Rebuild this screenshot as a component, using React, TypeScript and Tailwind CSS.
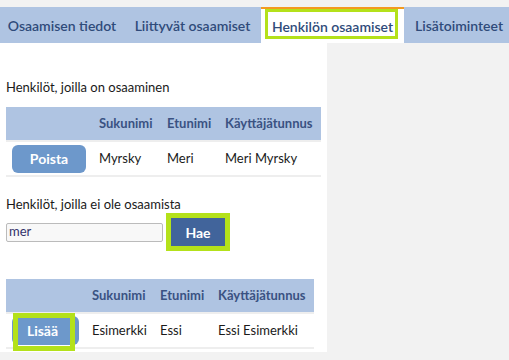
import React from "react";

const tabs = [
  { label: "Osaamisen tiedot", w: "w-[124px]", active: false },
  { label: "Liittyvät osaamiset", w: "w-[137px]", active: false },
  { label: "Henkilön osaamiset", w: "w-[143px]", active: true },
  { label: "Lisätoiminteet", w: "w-[110px]", active: false },
];

function TabBar() {
  return (
    <div className="flex h-[36px] bg-[#afc4e2] mt-[7px]">
      {tabs.map((t) =>
        t.active ? (
          <div key={t.label} className={`${t.w} shrink-0 relative bg-white border-t-2 border-[#f39a1f] flex items-center justify-center`}>
            <span className="text-[14px] font-semibold text-[#2f4b7a]">{t.label}</span>
            {/* korostuskehys */}
            <div className="absolute left-[4px] right-[6px] top-0 bottom-[4px] border-[3px] border-[#b4e11a]" />
          </div>
        ) : (
          <div key={t.label} className={`${t.w} shrink-0 flex items-center justify-center`}>
            <span className="text-[14px] font-semibold text-[#2f4b7a]">{t.label}</span>
          </div>
        )
      )}
    </div>
  );
}

function HeaderRow({ cols }: { cols: string }) {
  return (
    <div className={`grid ${cols} h-[35px] bg-[#afc4e2] border-b-2 border-[#eeeeee] font-bold text-[#3a5282] items-center`}>
      <div />
      <div className="pl-[6px]">Sukunimi</div>
      <div className="pl-[6px]">Etunimi</div>
      <div className="pl-[6px]">Käyttäjätunnus</div>
    </div>
  );
}

export default function App() {
  return (
    <div className="w-[509px] h-[360px] bg-[#f2f2f2] overflow-hidden text-[#1a1a1a] flow-root" style={{ fontFamily: "Lato, 'Liberation Sans', sans-serif" }}>
      <TabBar />
      <div className="w-[327px] h-[309px] bg-white px-[6px] pt-[36px] text-[13px]">
        <div className="h-[17px] leading-[17px]">Henkilöt, joilla on osaaminen</div>

        {/* henkilöt joilla osaaminen */}
        <div className="mt-[11px] w-[315px]">
          <HeaderRow cols="grid-cols-[87px_68px_58px_102px]" />
          <div className="grid grid-cols-[87px_68px_58px_102px] h-[35px] border-b-2 border-[#eeeeee] items-center">
            <div className="pl-[6px]">
              <button className="w-[74px] h-[28px] rounded-[6px] bg-[#6d98cb] text-white font-bold text-[14px]">Poista</button>
            </div>
            <div className="pl-[6px]">Myrsky</div>
            <div className="pl-[6px]">Meri</div>
            <div className="pl-[6px]">Meri Myrsky</div>
          </div>
        </div>

        <div className="h-[17px] leading-[17px] mt-[19px]">Henkilöt, joilla ei ole osaamista</div>

        {/* haku */}
        <div className="flex items-center h-[38px]">
          <input
            defaultValue="mer"
            className="w-[157px] h-[19px] border border-[#bbbbbb] rounded-[2px] bg-[#f8f8f8] px-[2px] text-[13px] text-[#33336b] outline-none"
          />
          <div className="ml-[3px] p-[5px] bg-[#b4e11a]">
            <button className="w-[54px] h-[28px] bg-[#41649b] text-white font-bold text-[14px]">Hae</button>
          </div>
        </div>

        {/* henkilöt joilla ei osaamista */}
        <div className="mt-[28px] w-[308px]">
          <HeaderRow cols="grid-cols-[80px_68px_58px_102px]" />
          <div className="grid grid-cols-[80px_68px_58px_102px] h-[35px] border-b-2 border-[#eeeeee] items-center">
            <div className="pl-[6px]">
              <div className="relative w-[67px] h-[29px]">
                <button className="w-[67px] h-[29px] rounded-[6px] bg-[#6d98cb] text-white font-bold text-[14px] pr-[6px]">Lisää</button>
                <div className="absolute left-[1px] top-[-3px] w-[62px] h-[38px] border-[5px] border-[#b4e11a]" />
              </div>
            </div>
            <div className="pl-[6px]">Esimerkki</div>
            <div className="pl-[6px]">Essi</div>
            <div className="pl-[6px]">Essi Esimerkki</div>
          </div>
        </div>
      </div>
    </div>
  );
}
